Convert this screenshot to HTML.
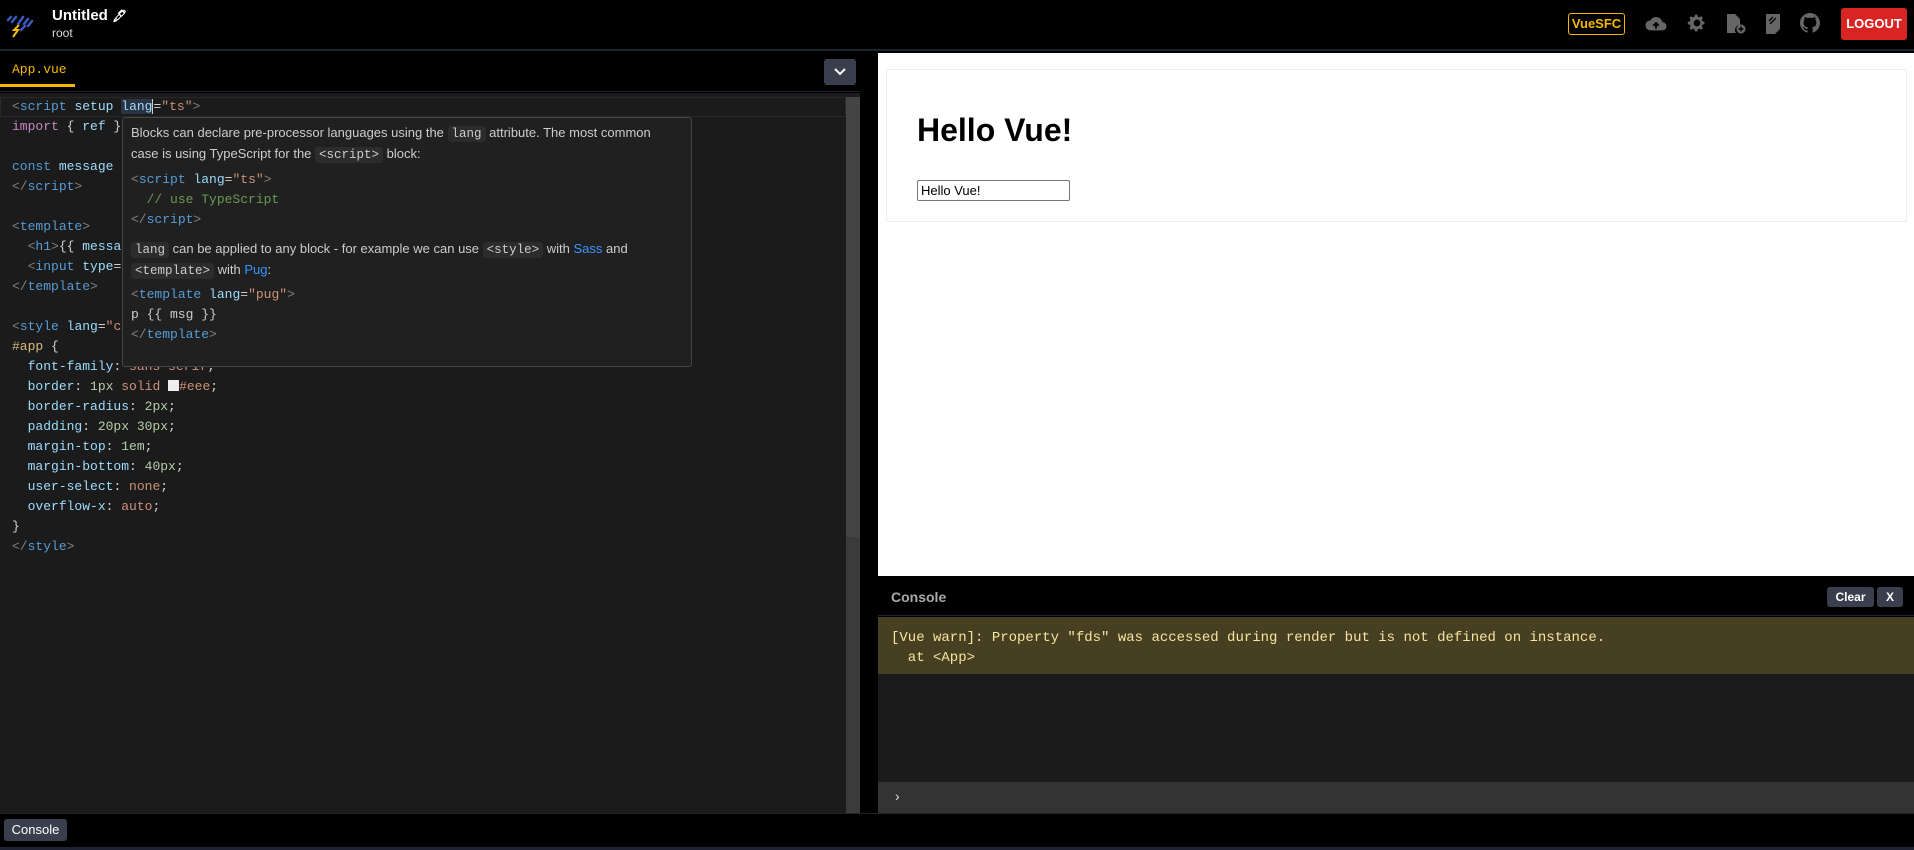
<!DOCTYPE html>
<html><head><meta charset="utf-8"><style>
*{box-sizing:border-box;margin:0;padding:0}
body{width:1914px;height:850px;overflow:hidden;background:#000;font-family:"Liberation Sans",sans-serif;position:relative}
.abs{position:absolute}
.mono{font-family:"Liberation Mono",monospace}
.code{position:absolute;left:12px;top:97px;font-size:13px;line-height:20px;color:#d4d4d4;white-space:pre}
.t{color:#808080}.tg{color:#569cd6}.at{color:#9cdcfe}.st{color:#ce9178}.kw{color:#c586c0}.cm{color:#6a9955}.nu{color:#b5cea8}.sel{color:#d7ba7d}.pr{color:#9cdcfe}
.tip{position:absolute;left:122px;top:117px;width:570px;height:250px;background:#202020;border:1px solid #454545;border-radius:3px;color:#ccc;font-size:13px}
.tip p{position:absolute;left:8px;width:560px;line-height:21px;white-space:nowrap}
.ic{background:#2c2c2c;padding:1px 4px;border-radius:3px;font-family:"Liberation Mono",monospace;font-size:12.5px}
.tip .cd{position:absolute;left:8px;font-family:"Liberation Mono",monospace;font-size:13px;line-height:20px;white-space:pre}
a{color:#3794ff}
</style></head><body>
<div class="abs" style="left:0;top:0;width:1914px;height:51px;background:#000;border-bottom:2px solid #1d2330"></div>
<svg class="abs" style="left:6px;top:14px" width="30" height="24" viewBox="0 0 30 24">
<g stroke="#3b5bbf" stroke-width="2.5" stroke-linecap="round"><line x1="2" y1="6" x2="5" y2="3"/><line x1="6" y1="8" x2="10" y2="3"/><line x1="12" y1="10" x2="17" y2="3"/><line x1="18" y1="10" x2="22" y2="5"/><line x1="22" y1="12" x2="26" y2="7"/><line x1="15" y1="16" x2="19" y2="12"/></g>
<path d="M13 11 L8 16 L12 16 L7 23" stroke="#f5b800" stroke-width="2" fill="none"/></svg>
<div class="abs" style="left:52px;top:7px;color:#fff;font-size:15px;font-weight:bold">Untitled <span style="font-size:12px">🖋</span></div>
<div class="abs" style="left:52px;top:26px;color:#ddd;font-size:12px">root</div>
<div class="abs" style="left:1568px;top:13px;width:57px;height:22px;border:1px solid #f5b800;border-radius:3px;color:#f5b800;font-size:13px;font-weight:bold;text-align:center;line-height:20px">VueSFC</div>
<svg class="abs" style="left:1645px;top:14px" width="22" height="20" viewBox="0 0 24 20"><path d="M19 8a7 7 0 0 0-13-2A5.5 5.5 0 0 0 6 17h13a4.5 4.5 0 0 0 0-9z" fill="#666"/><path d="M12 15V9m-3 3l3-3 3 3" stroke="#000" stroke-width="2" fill="none"/></svg>
<svg class="abs" style="left:1687px;top:13px" width="20" height="20" viewBox="0 0 24 24"><path fill="#666" d="M12 8a4 4 0 1 0 0 8 4 4 0 0 0 0-8zm9 5.5v-3l-2.6-.6-.7-1.7 1.4-2.3-2.1-2.1-2.3 1.4-1.7-.7L12.5 2h-3l-.6 2.6-1.7.7-2.3-1.4-2.1 2.1 1.4 2.3-.7 1.7L1 10.5v3l2.6.6.7 1.7-1.4 2.3 2.1 2.1 2.3-1.4 1.7.7.5 2.5h3l.6-2.6 1.7-.7 2.300 1.4 2.1-2.1-1.4-2.3.7-1.7z" fill-rule="evenodd"/></svg>
<svg class="abs" style="left:1725px;top:13px" width="22" height="22" viewBox="0 0 22 22"><path d="M2 1h8l5 5v6a5 5 0 0 0-4 8H2z" fill="#666"/><circle cx="16" cy="16" r="4.5" fill="#666"/><path d="M16 13.5v5M13.5 16h5" stroke="#000" stroke-width="1.5"/></svg>
<svg class="abs" style="left:1765px;top:13px" width="16" height="21" viewBox="0 0 16 21"><path d="M1 1h14v15l-5 5H1z" fill="#666"/><path d="M4 8l4-4M5 11l6-6" stroke="#000" stroke-width="1.3"/></svg>
<svg class="abs" style="left:1800px;top:13px" width="20" height="20" viewBox="0 0 16 16"><path fill="#666" d="M8 0C3.6 0 0 3.6 0 8c0 3.5 2.3 6.5 5.5 7.6.4.1.5-.2.5-.4v-1.4c-2.2.5-2.7-1-2.7-1-.4-.9-.9-1.2-.9-1.2-.7-.5.1-.5.1-.5.8.1 1.2.8 1.2.8.7 1.3 1.9.9 2.3.7.1-.5.3-.9.5-1.100-1.8-.2-3.6-.9-3.6-4 0-.9.3-1.6.8-2.1-.1-.2-.4-1 .1-2.1 0 0 .7-.2 2.2.8.6-.2 1.3-.3 2-.3s1.4.1 2 .3c1.5-1 2.2-.8 2.2-.8.4 1.1.2 1.9.1 2.1.5.6.8 1.3.8 2.1 0 3.1-1.9 3.8-3.6 4 .3.3.6.8.6 1.5v2.2c0 .2.1.5.6.4C13.7 14.5 16 11.5 16 8c0-4.4-3.6-8-8-8z"/></svg>
<div class="abs" style="left:1841px;top:8px;width:66px;height:32px;background:#d92424;border-radius:3px;color:#fff;font-size:13px;font-weight:bold;text-align:center;line-height:32px">LOGOUT</div>

<div class="abs" style="left:0;top:53px;width:860px;height:39px;background:#000;border-bottom:1px solid #1d2330"></div>
<div class="abs mono" style="left:12px;top:62px;color:#f5b800;font-size:13px">App.vue</div>
<div class="abs" style="left:0;top:84px;width:75px;height:3px;background:#f5b800"></div>
<div class="abs" style="left:824px;top:59px;width:32px;height:26px;background:#3a3f4e;border-radius:3px"></div>
<svg class="abs" style="left:833px;top:66px" width="14" height="12" viewBox="0 0 14 12"><path d="M2 3l5 5 5-5" stroke="#fff" stroke-width="2" fill="none"/></svg>
<div class="abs" style="left:0;top:93px;width:860px;height:720px;background:#1b1b1b"></div>
<div class="abs" style="left:0;top:97px;width:846px;height:20px;border:1px solid #282828"></div>
<div class="abs" style="left:846px;top:97px;width:14px;height:716px;background:#3b3b3b"></div>
<div class="abs" style="left:846px;top:97px;width:14px;height:440px;background:#444"></div>
<div class="code mono"><span class="t">&lt;</span><span class="tg">script</span> <span class="at">setup</span> <span class="at" style="background:#2a3442">lang</span><span style="border-left:1px solid #ccc">=</span><span class="st">"ts"</span><span class="t">&gt;</span>
<span class="kw">import</span> { <span class="at">ref</span> } <span class="kw">from</span> <span class="st">'vue'</span>

<span class="tg">const</span> <span class="at">message</span> = <span class="at">ref</span>(<span class="st">'Hello Vue!'</span>)
<span class="t">&lt;/</span><span class="tg">script</span><span class="t">&gt;</span>

<span class="t">&lt;</span><span class="tg">template</span><span class="t">&gt;</span>
  <span class="t">&lt;</span><span class="tg">h1</span><span class="t">&gt;</span>{{ <span class="at">message</span> }}<span class="t">&lt;/</span><span class="tg">h1</span><span class="t">&gt;</span>
  <span class="t">&lt;</span><span class="tg">input</span> <span class="at">type</span>=<span class="st">"text"</span><span class="t">&gt;</span>
<span class="t">&lt;/</span><span class="tg">template</span><span class="t">&gt;</span>

<span class="t">&lt;</span><span class="tg">style</span> <span class="at">lang</span>=<span class="st">"css"</span><span class="t">&gt;</span>
<span class="sel">#app</span> {
  <span class="pr">font-family</span>: <span class="st">sans-serif</span>;
  <span class="pr">border</span>: <span class="nu">1px</span> <span class="st">solid</span> <span style="display:inline-block;width:11px;height:11px;background:#eee;vertical-align:-1px"></span><span class="st">#eee</span>;
  <span class="pr">border-radius</span>: <span class="nu">2px</span>;
  <span class="pr">padding</span>: <span class="nu">20px 30px</span>;
  <span class="pr">margin-top</span>: <span class="nu">1em</span>;
  <span class="pr">margin-bottom</span>: <span class="nu">40px</span>;
  <span class="pr">user-select</span>: <span class="st">none</span>;
  <span class="pr">overflow-x</span>: <span class="st">auto</span>;
}
<span class="t">&lt;/</span><span class="tg">style</span><span class="t">&gt;</span></div>
<div class="tip">
<p style="top:4px">Blocks can declare pre-processor languages using the <span class="ic">lang</span> attribute. The most common</p>
<p style="top:25px">case is using TypeScript for the <span class="ic">&lt;script&gt;</span> block:</p>
<div class="cd" style="top:52px"><span class="t">&lt;</span><span class="tg">script</span> <span class="at">lang</span>=<span class="st">"ts"</span><span class="t">&gt;</span>
  <span class="cm">// use TypeScript</span>
<span class="t">&lt;/</span><span class="tg">script</span><span class="t">&gt;</span></div>
<p style="top:120px"><span class="ic">lang</span> can be applied to any block - for example we can use <span class="ic">&lt;style&gt;</span> with <a>Sass</a> and</p>
<p style="top:141px"><span class="ic">&lt;template&gt;</span> with <a>Pug</a>:</p>
<div class="cd" style="top:167px"><span class="t">&lt;</span><span class="tg">template</span> <span class="at">lang</span>=<span class="st">"pug"</span><span class="t">&gt;</span>
p {{ msg }}
<span class="t">&lt;/</span><span class="tg">template</span><span class="t">&gt;</span></div>
</div>

<div class="abs" style="left:878px;top:53px;width:1036px;height:523px;background:#fff"></div>
<div class="abs" style="left:886px;top:69px;width:1021px;height:153px;border:1px solid #eee;border-radius:2px"></div>
<div class="abs" style="left:917px;top:112px;font-size:32px;font-weight:bold;color:#000">Hello Vue!</div>
<div class="abs" style="left:917px;top:180px;width:153px;height:21px;border:1px solid #767676;border-radius:2px;font-size:13px;padding:2px 3px;color:#000;background:#fff">Hello Vue!</div>

<div class="abs" style="left:878px;top:577px;width:1036px;height:39px;background:#000;border-bottom:1px solid #1d2330"></div>
<div class="abs" style="left:891px;top:589px;color:#aaa;font-size:14px;font-weight:bold">Console</div>
<div class="abs" style="left:1827px;top:587px;width:47px;height:20px;background:#3a3f4e;border-radius:3px;color:#fff;font-size:12px;font-weight:bold;text-align:center;line-height:20px">Clear</div>
<div class="abs" style="left:1877px;top:587px;width:26px;height:20px;background:#3a3f4e;border-radius:3px;color:#fff;font-size:12px;font-weight:bold;text-align:center;line-height:20px">X</div>
<div class="abs" style="left:878px;top:617px;width:1036px;height:57px;background:#473f22"></div>
<div class="abs mono" style="left:891px;top:628px;color:#f5e4a0;font-size:14px;line-height:20px;white-space:pre">[Vue warn]: Property "fds" was accessed during render but is not defined on instance.
  at &lt;App&gt;</div>
<div class="abs" style="left:878px;top:674px;width:1036px;height:108px;background:#1b1b1b"></div>
<div class="abs" style="left:878px;top:782px;width:1036px;height:31px;background:#333"></div>
<div class="abs" style="left:895px;top:788px;color:#ddd;font-size:14px">›</div>

<div class="abs" style="left:0;top:813px;width:1914px;height:37px;background:#000;border-top:1px solid #222"></div>
<div class="abs" style="left:4px;top:819px;width:63px;height:22px;background:#3a3f4e;border-radius:3px;color:#fff;font-size:13px;text-align:center;line-height:22px">Console</div>
<div class="abs" style="left:0;top:847px;width:1914px;height:3px;background:#1d2330"></div>
</body></html>
